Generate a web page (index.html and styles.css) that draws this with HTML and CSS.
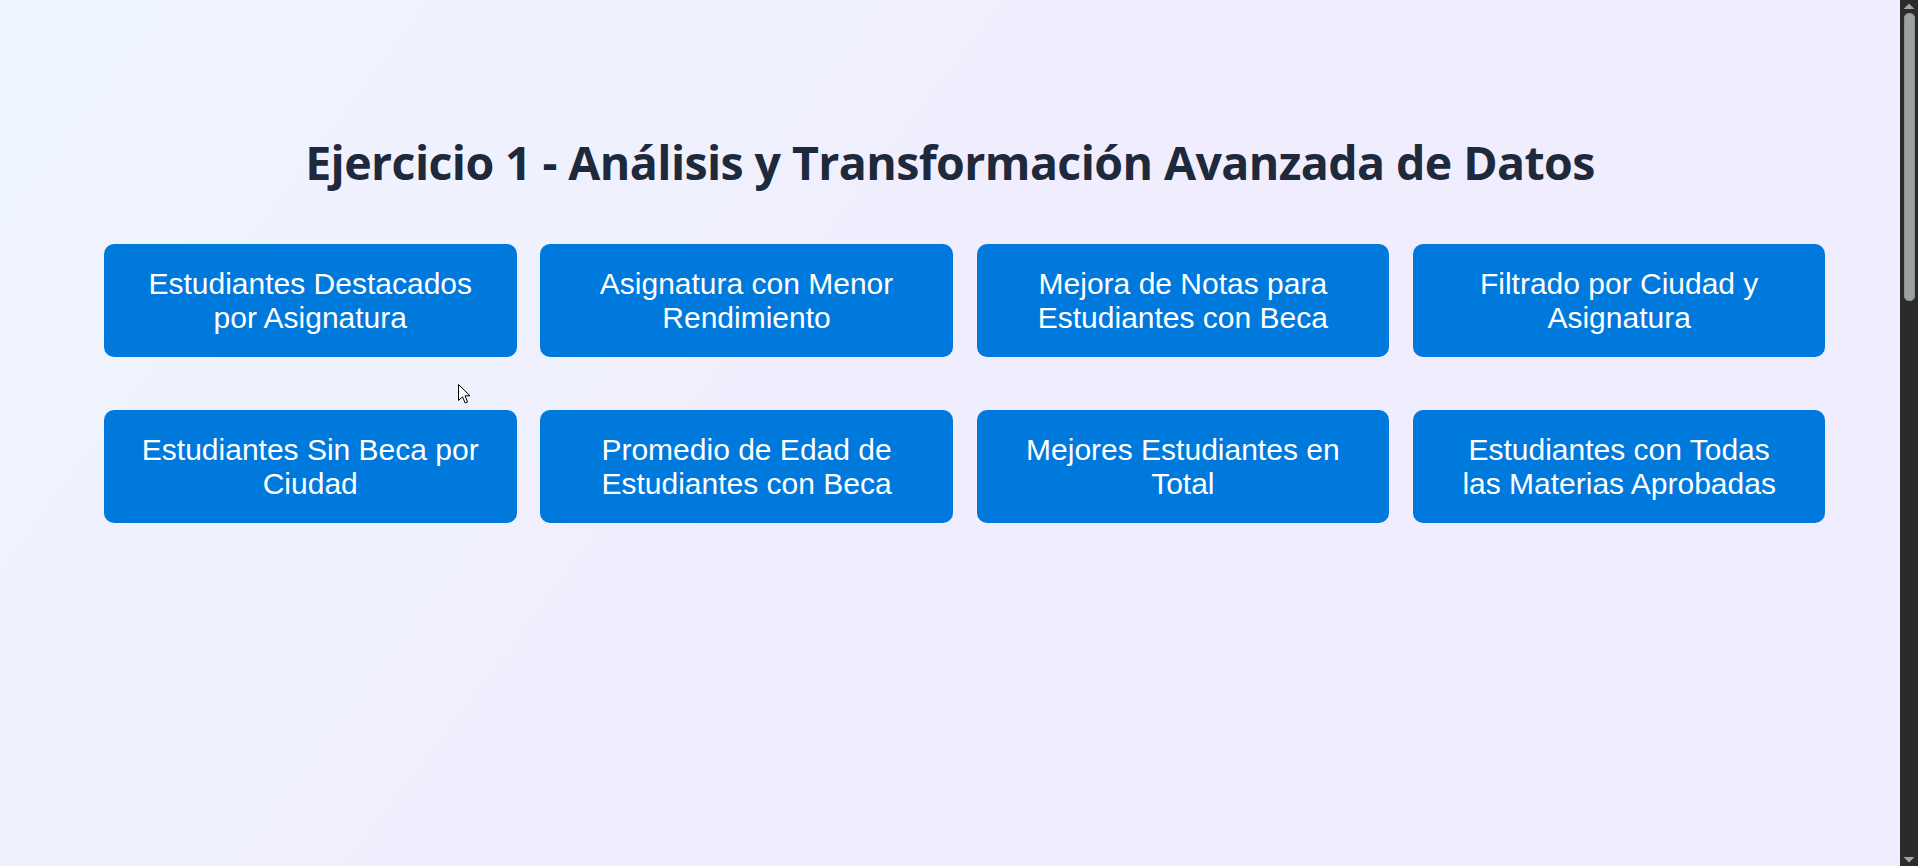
FILE: index.html
```html
<!DOCTYPE html>
<html lang="es">
<head>
<meta charset="utf-8">
<title>Ejercicio 1</title>
<link rel="stylesheet" href="styles.css">
</head>
<body>
<div class="window">
  <main class="page">
    <h1 class="title">Ejercicio 1 - Análisis y Transformación Avanzada de Datos</h1>
    <div class="grid">
      <button class="btn">Estudiantes Destacados por Asignatura</button>
      <button class="btn">Asignatura con Menor Rendimiento</button>
      <button class="btn">Mejora de Notas para Estudiantes con Beca</button>
      <button class="btn">Filtrado por Ciudad y Asignatura</button>
      <button class="btn">Estudiantes Sin Beca por Ciudad</button>
      <button class="btn">Promedio de Edad de Estudiantes con Beca</button>
      <button class="btn">Mejores Estudiantes en Total</button>
      <button class="btn">Estudiantes con Todas las Materias Aprobadas</button>
    </div>
    <svg class="cursor" width="13" height="20" viewBox="0 0 13 20"><path d="M0.5 0.5 L0.5 16.5 L4.5 12.8 L7.2 19 L9.6 18 L7 11.8 L12 11.8 Z" fill="#fff" stroke="#000" stroke-width="1"/></svg>
  </main>
  <aside class="scrollbar">
    <svg class="arrow" width="18" height="12" viewBox="0 0 18 12"><path d="M3.5 9 L9 3.5 L14.5 9 Z" fill="#a3a3a3"/></svg>
    <div class="thumb"></div>
    <div class="track-rest"></div>
    <svg class="arrow" width="18" height="12" viewBox="0 0 18 12"><path d="M3.5 3 L9 8.5 L14.5 3 Z" fill="#a3a3a3"/></svg>
  </aside>
</div>
</body>
</html>
```
FILE: styles.css
```css
html, body {
  margin: 0;
  height: 100%;
  overflow: hidden;
}
body {
  font-family: "Liberation Sans", Arial, sans-serif;
}
.window {
  display: flex;
  height: 866px;
}
.page {
  position: relative;
  flex: 1;
  padding-top: 130px;
  box-sizing: border-box;
  background: linear-gradient(to bottom right, #eff6ff 0%, #f0eefe 30%, #efedfd 100%) 0 0 / 1900px 2510px no-repeat;
  background-color: #efedfd;
}
.title {
  margin: 0;
  font-family: "Open Sans", sans-serif;
  font-weight: 700;
  font-size: 46.5px;
  letter-spacing: -0.6px;
  line-height: 64px;
  color: #1e293b;
  text-align: center;
}
.grid {
  display: grid;
  grid-template-columns: repeat(4, 412.5px);
  column-gap: 23.8px;
  row-gap: 53px;
  margin-top: 50px;
  padding-left: 104px;
}
.btn {
  height: 113px;
  padding: 23px 35px;
  box-sizing: border-box;
  border: none;
  border-radius: 10px;
  background: #0079dc;
  color: #fff;
  font-family: "Liberation Sans", Arial, sans-serif;
  font-size: 30px;
  line-height: 33.5px;
  text-align: center;
  cursor: pointer;
}
.cursor {
  position: absolute;
  left: 458px;
  top: 384px;
}
.scrollbar {
  width: 18px;
  flex: none;
  display: flex;
  flex-direction: column;
  align-items: center;
  background: #2b2b2b;
}
.arrow {
  flex: none;
  display: block;
}
.thumb {
  width: 11px;
  height: 288px;
  margin-top: 1px;
  margin-left: 1px;
  border-radius: 6px;
  background: #9fa2a2;
  box-shadow: inset 0 0 0 1px #8d9090;
}
.track-rest {
  flex: 1;
}
```
